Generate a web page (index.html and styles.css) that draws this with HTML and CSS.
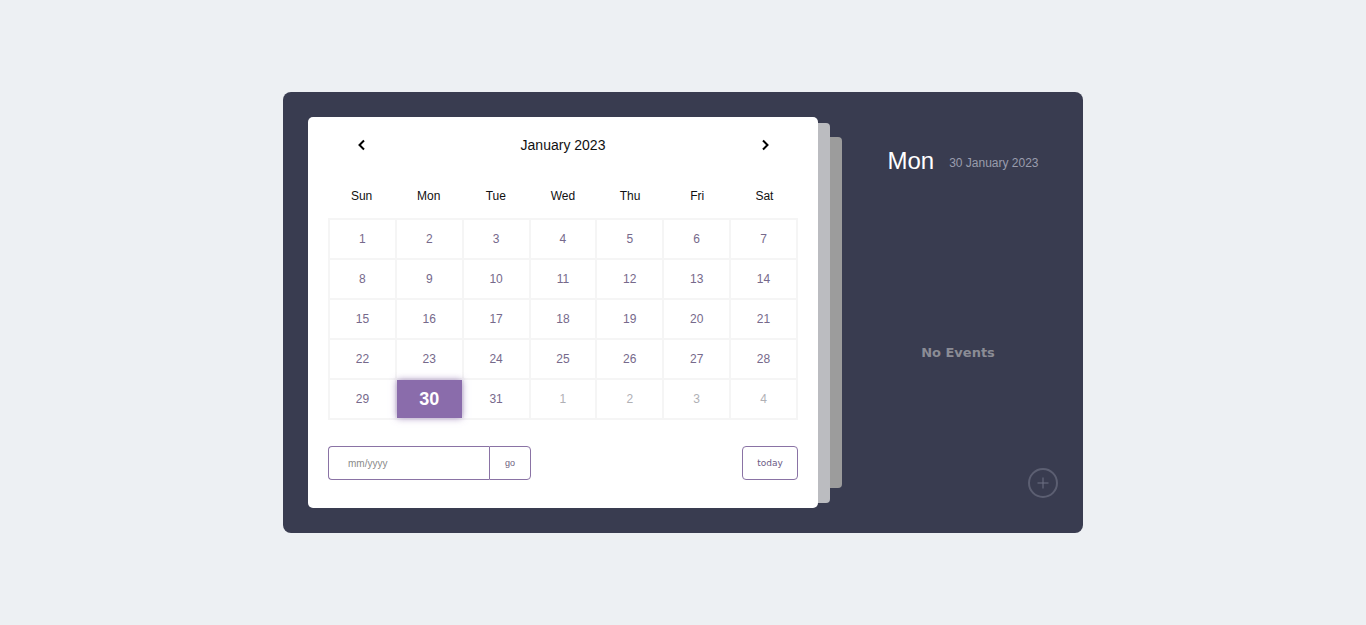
FILE: index.html
```html
<!DOCTYPE html>
<html lang="en">
<head>
<meta charset="utf-8">
<title>Calendar</title>
<link rel="stylesheet" href="styles.css">
</head>
<body>
<div class="app">
  <div class="book">
    <div class="card">
      <div class="month-row">
        <button class="nav" aria-label="previous">
          <svg width="10" height="12" viewBox="0 0 10 12"><polyline points="7,1.5 2.5,6 7,10.5" fill="none" stroke="#000" stroke-width="2"/></svg>
        </button>
        <div class="month">January 2023</div>
        <button class="nav" aria-label="next">
          <svg width="10" height="12" viewBox="0 0 10 12"><polyline points="3,1.5 7.5,6 3,10.5" fill="none" stroke="#000" stroke-width="2"/></svg>
        </button>
      </div>
      <div class="weekdays">
        <span>Sun</span><span>Mon</span><span>Tue</span><span>Wed</span><span>Thu</span><span>Fri</span><span>Sat</span>
      </div>
      <table class="grid">
        <tr><td>1</td><td>2</td><td>3</td><td>4</td><td>5</td><td>6</td><td>7</td></tr>
        <tr><td>8</td><td>9</td><td>10</td><td>11</td><td>12</td><td>13</td><td>14</td></tr>
        <tr><td>15</td><td>16</td><td>17</td><td>18</td><td>19</td><td>20</td><td>21</td></tr>
        <tr><td>22</td><td>23</td><td>24</td><td>25</td><td>26</td><td>27</td><td>28</td></tr>
        <tr><td>29</td><td class="sel"><span>30</span></td><td>31</td><td class="next">1</td><td class="next">2</td><td class="next">3</td><td class="next">4</td></tr>
      </table>
      <div class="footer">
        <div class="goto">
          <input class="goto-input" type="text" placeholder="mm/yyyy">
          <button class="goto-btn">go</button>
        </div>
        <button class="today-btn">today</button>
      </div>
    </div>
    <div class="sheet sheet-1"></div>
    <div class="sheet sheet-2"></div>
  </div>
  <div class="panel">
    <div class="day-head">
      <span class="day-name">Mon</span>
      <span class="day-date">30 January 2023</span>
    </div>
    <div class="events">No Events</div>
    <div class="panel-foot">
      <button class="add" aria-label="add event">
        <svg width="30" height="30" viewBox="0 0 30 30"><circle cx="15" cy="15" r="14" fill="none" stroke="#5c5f72" stroke-width="2"/><path d="M15 9.5v11M9.5 15h11" stroke="#6e7184" stroke-width="1"/></svg>
      </button>
    </div>
  </div>
</div>
</body>
</html>
```

FILE: styles.css
```css
* { box-sizing: border-box; }
html, body { margin: 0; padding: 0; }
body {
  background: #edf0f3;
  font-family: "Liberation Sans", Arial, sans-serif;
  height: 625px;
  display: flex;
  align-items: center;
  justify-content: center;
}
.app {
  width: 800px;
  height: 441px;
  background: #393c50;
  border-radius: 8px;
  padding: 25px;
  display: flex;
}
.book {
  display: flex;
  align-items: center;
}
.card {
  width: 510px;
  height: 391px;
  background: #fff;
  border-radius: 5px;
  padding: 0 20px;
  position: relative;
  z-index: 2;
}
.sheet { border-radius: 0 4px 4px 0; width: 12px; }
.sheet-1 { height: 380px; background: #bbbcc0; }
.sheet-2 { height: 351px; background: #9c9c9c; }

.month-row {
  height: 56px;
  display: flex;
  align-items: center;
  justify-content: space-between;
}
.nav {
  width: 67px;
  height: 30px;
  border: 0;
  background: none;
  padding: 0;
  display: flex;
  align-items: center;
  justify-content: center;
}
.month { font-size: 14px; color: #111; }
.weekdays {
  height: 45px;
  display: grid;
  grid-template-columns: repeat(7, 1fr);
  align-items: center;
  text-align: center;
  font-size: 12px;
  color: #111;
  padding-top: 1px;
}
.grid {
  width: 470px;
  border-collapse: collapse;
  table-layout: fixed;
}
.grid td {
  height: 40px;
  border: 2px solid #f5f5f5;
  text-align: center;
  font-size: 12px;
  color: #76698b;
  padding: 0;
}
.grid td.next { color: #b0b0b5; }
.grid td.sel span {
  display: flex;
  align-items: center;
  justify-content: center;
  height: 38px;
  background: #8a6cab;
  color: #fff;
  font-size: 18px;
  font-weight: bold;
  box-shadow: 0 0 7px rgba(138, 108, 171, 0.75);
  position: relative;
}
.footer {
  margin-top: 26px;
  display: flex;
  justify-content: space-between;
}
.goto { display: flex; }
.goto-input {
  width: 161px;
  height: 34px;
  border: 1px solid #8a73a5;
  border-right: 0;
  border-radius: 4px 0 0 4px;
  padding: 0 0 0 19px;
  font-family: "Liberation Sans", Arial, sans-serif;
  font-size: 10px;
  outline: none;
}
.goto-input::placeholder { color: #8a8a8a; }
.goto-btn {
  width: 42px;
  height: 34px;
  border: 1px solid #8a73a5;
  border-radius: 0 4px 4px 0;
  background: #fff;
  font-family: "Liberation Sans", Arial, sans-serif;
  font-size: 9px;
  color: #6d6080;
  padding: 0;
}
.today-btn {
  width: 56px;
  height: 34px;
  border: 1px solid #8a73a5;
  border-radius: 4px;
  background: #fff;
  font-family: "DejaVu Sans", sans-serif;
  font-size: 9px;
  color: #6b5a86;
  padding: 0;
}

.panel {
  flex: 1;
  padding-left: 26px;
  display: flex;
  flex-direction: column;
}
.day-head {
  margin-top: 30px;
  height: 28px;
  display: flex;
  align-items: center;
  justify-content: center;
  gap: 15px;
}
.day-name { font-size: 24px; color: #fff; line-height: 28px; }
.day-date { font-size: 12px; color: #9a9cad; line-height: 14px; margin-top: 3px; }
.events {
  margin-top: 168px;
  margin-right: 10px;
  height: 20px;
  line-height: 20px;
  text-align: center;
  font-family: "DejaVu Sans", sans-serif;
  font-weight: bold;
  font-size: 13px;
  color: #8b8c95;
}
.panel-foot {
  flex: 1;
  display: flex;
  justify-content: flex-end;
  align-items: flex-end;
  padding-bottom: 10px;
}
.add {
  width: 30px;
  height: 30px;
  border: 0;
  padding: 0;
  background: none;
  display: block;
}
.add svg { display: block; }
```
